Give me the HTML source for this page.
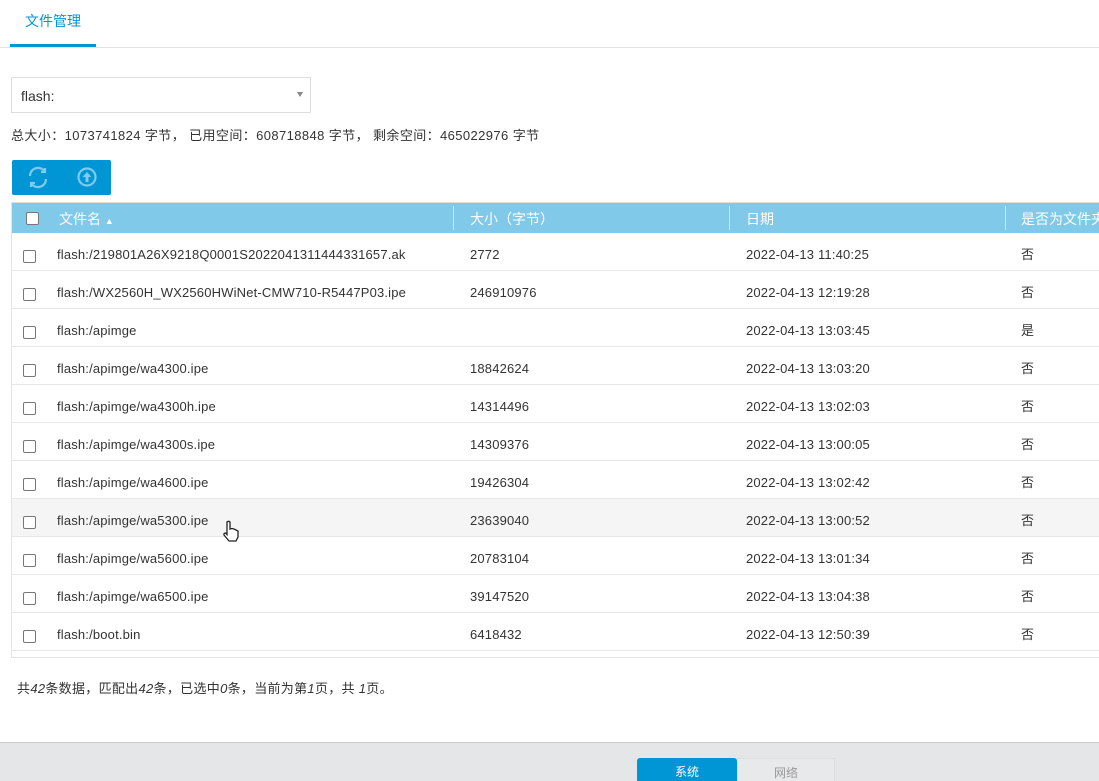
<!DOCTYPE html>
<html style="overflow:hidden"><head><meta charset="utf-8"><style>
*{box-sizing:border-box;margin:0;padding:0}
html,body{width:1099px;height:781px;overflow:hidden}
body{background:#fff;font-family:"Liberation Sans","Noto Sans CJK SC",sans-serif;font-size:13px;color:#333;position:relative}
.tab{position:absolute;left:10px;top:0;width:86px;height:48px;color:#0096d6;font-size:14px;text-align:center;line-height:42px;border-bottom:4px solid #0096d6}
.tabline{position:absolute;left:0;top:47px;width:1099px;border-top:1px solid #e3e3e3}
.sel{position:absolute;left:11px;top:77px;width:300px;height:36px;border:1px solid #ddd;padding-left:9px;line-height:36px;font-size:14px}
.sel:after{content:"";position:absolute;right:7px;top:14px;border:3.5px solid transparent;border-top:5px solid #888}
.info{position:absolute;left:11px;top:125px;font-size:13px;letter-spacing:0.4px}
.tb{position:absolute;left:12px;top:160px;width:99px;height:35px;background:#0096d6;border-radius:2px}
.tbl{position:absolute;left:11px;top:202px;width:1100px;height:456px;border-left:1px solid #e3e3e3;border-bottom:1px solid #e3e3e3;overflow:hidden}
.hd{height:31px;background:#80c9e9;color:#fff;border-top:1px solid #ddd;position:relative;font-size:14px}
.hd span{position:absolute;top:6px}
.sep{position:absolute;top:3px;height:24px;border-left:1px solid #cfe6f2}
.row{height:38px;border-bottom:1px solid #e8e8e8;position:relative;letter-spacing:0.17px}
.row span{position:absolute;top:3px;line-height:38px}
.cb{position:absolute;left:11px;top:17px;width:13px;height:13px;border:1px solid #777;border-radius:2px;background:#fff}
.hd .cb{top:9px;left:14px}
.c1{left:45px}.c2{left:458px}.c3{left:734px}.c4{left:1009px}
.foot{position:absolute;left:17px;top:678px;font-size:13px;letter-spacing:0.3px}
.bar{position:absolute;left:0;top:742px;width:1099px;height:39px;background:#e5e6e8;border-top:1px solid #ccc;overflow:hidden}
.b1{position:absolute;left:637px;top:15px;width:100px;height:30px;background:#0096d6;color:#fff;text-align:center;line-height:28px;border-radius:3px 3px 0 0;font-size:12px}
.b2{position:absolute;left:737px;top:15px;width:98px;height:30px;background:#e8e9eb;color:#999;text-align:center;line-height:28px;border:1px solid #ddd;font-size:12px}
</style></head><body>
<div class="tab">文件管理</div><div class="tabline"></div>
<div class="sel">flash:</div>
<div class="info">总大小：1073741824 字节， 已用空间：608718848 字节， 剩余空间：465022976 字节</div>
<div class="tb">
<svg width="99" height="35" viewBox="0 0 99 35">
<g fill="none" stroke="#7fcaef" stroke-width="2.2">
<path d="M33 12 A8 8 0 0 0 18 16"/><path d="M19 23 A8 8 0 0 0 34 19"/>
<path d="M33 8 L33 12 L29 12" /><path d="M19 27 L19 23 L23 23"/>
<circle cx="75" cy="17" r="8.5"/>
</g>
<path d="M75 12 L79.5 17 L76.5 17 L76.5 22 L73.5 22 L73.5 17 L70.5 17Z" fill="#7fcaef"/>
</svg></div>
<div class="tbl">
<div class="hd"><div class="cb"></div><span class="c1" style="left:47px">文件名 <small style="font-size:9px">▲</small></span>
<div class="sep" style="left:441px"></div><span class="c2">大小（字节）</span>
<div class="sep" style="left:717px"></div><span class="c3">日期</span>
<div class="sep" style="left:993px"></div><span class="c4">是否为文件夹</span></div>
<div class="row"><div class="cb"></div><span class="c1">flash:/219801A26X9218Q0001S2022041311444331657.ak</span><span class="c2">2772</span><span class="c3">2022-04-13 11:40:25</span><span class="c4">否</span></div>
<div class="row"><div class="cb"></div><span class="c1">flash:/WX2560H_WX2560HWiNet-CMW710-R5447P03.ipe</span><span class="c2">246910976</span><span class="c3">2022-04-13 12:19:28</span><span class="c4">否</span></div>
<div class="row"><div class="cb"></div><span class="c1">flash:/apimge</span><span class="c2"></span><span class="c3">2022-04-13 13:03:45</span><span class="c4">是</span></div>
<div class="row"><div class="cb"></div><span class="c1">flash:/apimge/wa4300.ipe</span><span class="c2">18842624</span><span class="c3">2022-04-13 13:03:20</span><span class="c4">否</span></div>
<div class="row"><div class="cb"></div><span class="c1">flash:/apimge/wa4300h.ipe</span><span class="c2">14314496</span><span class="c3">2022-04-13 13:02:03</span><span class="c4">否</span></div>
<div class="row"><div class="cb"></div><span class="c1">flash:/apimge/wa4300s.ipe</span><span class="c2">14309376</span><span class="c3">2022-04-13 13:00:05</span><span class="c4">否</span></div>
<div class="row"><div class="cb"></div><span class="c1">flash:/apimge/wa4600.ipe</span><span class="c2">19426304</span><span class="c3">2022-04-13 13:02:42</span><span class="c4">否</span></div>
<div class="row" style="background:#f5f5f5"><div class="cb"></div><span class="c1">flash:/apimge/wa5300.ipe</span><span class="c2">23639040</span><span class="c3">2022-04-13 13:00:52</span><span class="c4">否</span>
<svg style="position:absolute;left:210px;top:21px" width="18" height="24" viewBox="0 0 18 24"><path d="M5 2 Q6.5 0.5 8 2 L8 9 L10 8.5 L12 9 L14 10 L16 11 L16 17 L14 21 L7 21 L2 15 Q1.5 13 3.5 13 L5 14.5Z" fill="#fff" stroke="#222" stroke-width="1.3"/></svg></div>
<div class="row"><div class="cb"></div><span class="c1">flash:/apimge/wa5600.ipe</span><span class="c2">20783104</span><span class="c3">2022-04-13 13:01:34</span><span class="c4">否</span></div>
<div class="row"><div class="cb"></div><span class="c1">flash:/apimge/wa6500.ipe</span><span class="c2">39147520</span><span class="c3">2022-04-13 13:04:38</span><span class="c4">否</span></div>
<div class="row"><div class="cb"></div><span class="c1">flash:/boot.bin</span><span class="c2">6418432</span><span class="c3">2022-04-13 12:50:39</span><span class="c4">否</span></div>
</div>
<div class="foot">共<i>42</i>条数据，匹配出<i>42</i>条，已选中<i>0</i>条，当前为第<i>1</i>页，共 <i>1</i>页。</div>
<div class="bar"><div class="b1">系统</div><div class="b2">网络</div></div>
</body></html>
